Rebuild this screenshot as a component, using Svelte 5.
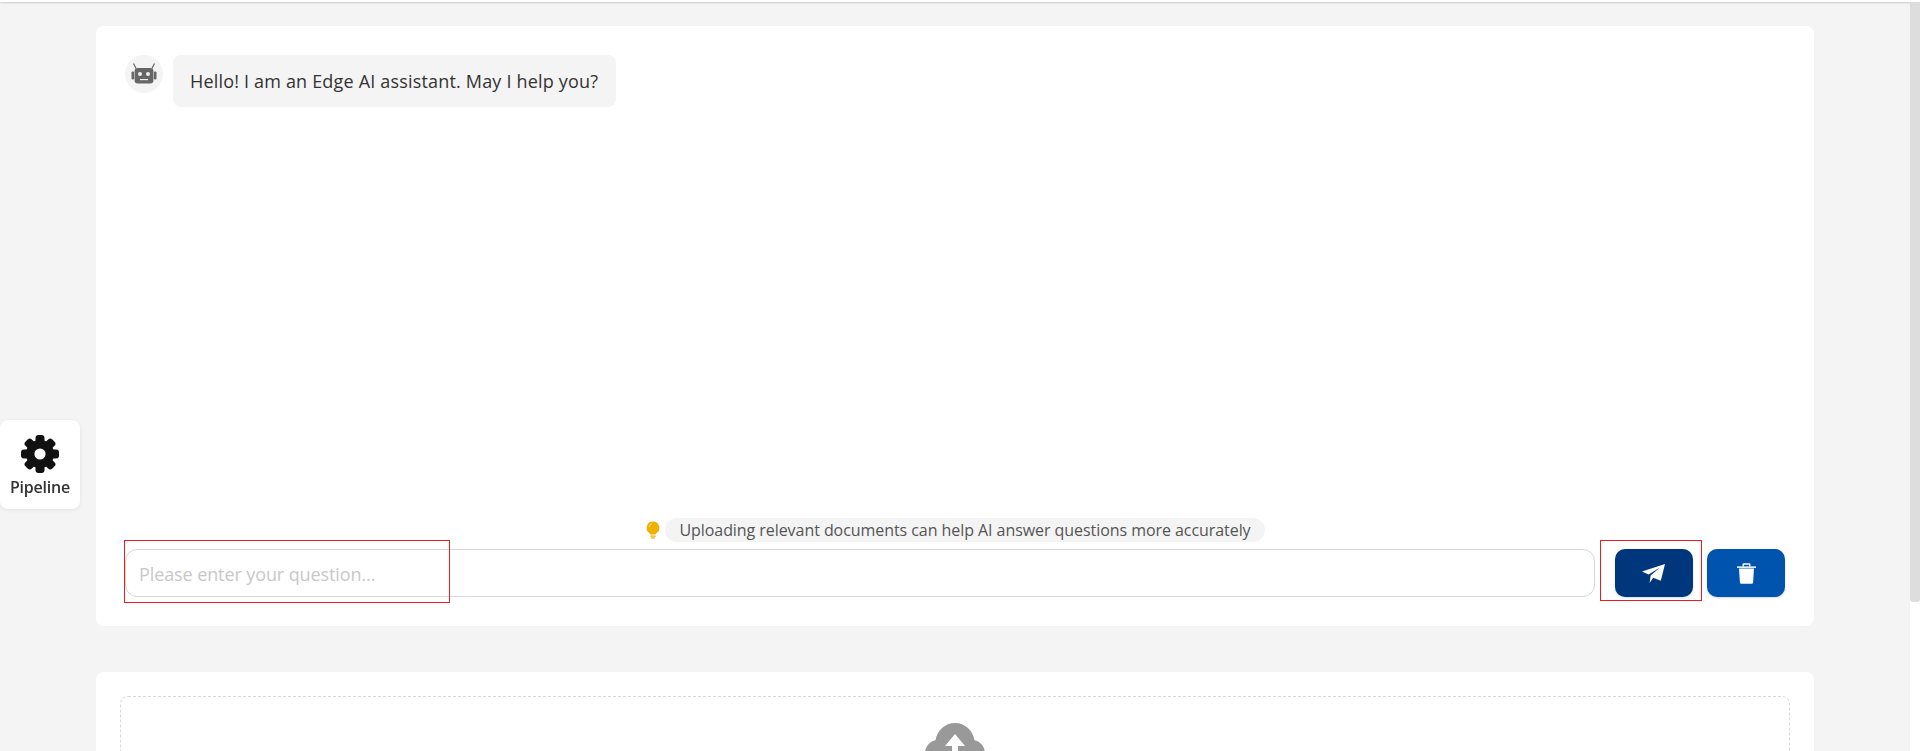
<script>
  let question = $state('');
  const teeth = [0, 45, 90, 135, 180, 225, 270, 315];
</script>

<div class="topbar"></div>

<aside class="pipeline-btn">
  <svg class="gear" viewBox="0 0 38 38" aria-hidden="true">
    {#each teeth as angle}
      <rect x="14.5" y="0" width="9" height="10" rx="3" fill="#111" transform="rotate({angle} 19 19)" />
    {/each}
    <circle cx="19" cy="19" r="14" fill="#111" />
    <circle cx="19" cy="19" r="5.6" fill="#fff" />
  </svg>
  <span>Pipeline</span>
</aside>

<main>
  <section class="card chat">
    <div class="messages">
      <div class="avatar">
        <svg viewBox="0 0 26 21" width="26" height="21" aria-hidden="true">
          <path d="M2.500 .5l2.600 5M23.500 .5l-2.600 5" stroke="#666" stroke-width="1.2" fill="none" />
          <rect x="0.5" y="8.500" width="2.600" height="8" rx="1" fill="#666" />
          <rect x="22.900" y="8.500" width="2.600" height="8" rx="1" fill="#666" />
          <rect x="3.600" y="5" width="18.800" height="15.500" rx="3.200" fill="#666" />
          <circle cx="9" cy="11" r="2" fill="#eee" />
          <circle cx="17" cy="11" r="2" fill="#eee" />
          <rect x="9" y="16" width="8" height="1.200" fill="#eee" />
        </svg>
      </div>
      <div class="bubble">Hello! I am an Edge AI assistant. May I help you?</div>
    </div>

    <div class="tip">
      <svg viewBox="0 0 16 18" width="16" height="18" aria-hidden="true">
        <path d="M8 0.5a6.300 6.300 0 0 0-3.600 11.500c.5.4.8.9.8 1.500h5.600c0-.6.3-1.100.8-1.500A6.300 6.300 0 0 0 8 .5z" fill="#efb000" />
        <path d="M4.200 5.800a3.800 3.800 0 0 1 2.600-3" stroke="#fbe39a" stroke-width="1" fill="none" />
        <rect x="5.300" y="14.400" width="5.400" height="1.400" rx=".5" fill="#efb000" />
        <rect x="6" y="16.300" width="4" height="1.300" rx=".6" fill="#efb000" />
      </svg>
      <span>Uploading relevant documents can help AI answer questions more accurately</span>
    </div>

    <div class="input-row">
      <div class="field">
        <input bind:value={question} placeholder="Please enter your question..." />
        <div class="mark mark-input"></div>
      </div>
      <button class="send" aria-label="Send">
        <svg viewBox="0 0 23 19" width="23" height="19" aria-hidden="true">
          <path d="M23 0L0 7.400l6.600 3L18 3.600 8.600 11.600 7.600 19l3.600-5.200 7.600 3z" fill="#fff" />
        </svg>
        <div class="mark mark-send"></div>
      </button>
      <button class="clear" aria-label="Clear">
        <svg viewBox="0 0 19 21" width="19" height="21" aria-hidden="true">
          <path d="M5.500 3.400V1.600C5.500.8 6.100.3 6.900.3h5.200c.8 0 1.400.5 1.400 1.300v1.800h-1.400V1.800H6.900v1.600z" fill="#fff" />
          <path d="M0 3.400h19v1.500H0z" fill="#fff" />
          <path d="M2 5.600h15l-.9 13.600c-.1 1-.8 1.600-1.700 1.600H4.600c-.9 0-1.600-.6-1.700-1.600z" fill="#fff" />
        </svg>
      </button>
    </div>
  </section>

  <section class="card upload">
    <div class="dropzone">
      <svg viewBox="0 0 60 44" width="60" height="44" aria-hidden="true">
        <path d="M14 44C6 44 0 38 0 30.500 0 24 4.500 18.500 10.500 17.300 12 7.500 20 0 30 0s18 7.500 19.500 17.300C55.500 18.500 60 24 60 30.500 60 38 54 44 46 44z" fill="#999" />
        <path d="M30 11L20 23h7v21h6V23h7z" fill="#fff" />
      </svg>
    </div>
  </section>
</main>

<div class="scrollbar"><div class="thumb"></div></div>

<style>
  :global(body) {
    background: #f4f4f4;
    font-family: "Open Sans", "Noto Sans", sans-serif;
    height: 751px;
    overflow: hidden;
    color: #333;
  }

  .topbar {
    height: 2px;
    background: #fff;
    box-shadow: 0 1px 2px rgba(0, 0, 0, 0.18);
  }

  main {
    width: 1718px;
    margin: 24px 0 0 96px;
  }

  .card {
    background: #fff;
    border-radius: 8px;
  }

  .chat {
    height: 600px;
    box-sizing: border-box;
    padding: 29px;
    display: flex;
    flex-direction: column;
  }

  .messages {
    flex: 1;
    display: flex;
    align-items: flex-start;
    gap: 10px;
  }

  .avatar {
    width: 38px;
    height: 38px;
    border-radius: 50%;
    background: #f4f4f4;
    display: flex;
    align-items: center;
    justify-content: center;
    padding-bottom: 2px;
    box-sizing: border-box;
  }

  .bubble {
    background: #f4f4f4;
    border-radius: 8px;
    padding: 14px 18px 14px 17px;
    font-size: 18px;
    letter-spacing: 0.18px;
    line-height: 24px;
    color: #333;
  }

  .tip {
    align-self: center;
    display: flex;
    align-items: center;
    gap: 4px;
    margin-bottom: 7px;
    font-size: 16px;
    letter-spacing: -0.06px;
    color: #555;
  }

  .tip span {
    background: #f4f4f4;
    border-radius: 12px;
    height: 24px;
    line-height: 24px;
    padding: 0 14px;
  }

  .input-row {
    display: flex;
    height: 48px;
  }

  .field {
    flex: 1;
    position: relative;
  }

  input {
    width: 100%;
    height: 48px;
    box-sizing: border-box;
    border: 1px solid #d6d6d6;
    border-radius: 12px;
    padding: 2px 13px 0;
    font: inherit;
    font-size: 18px;
    letter-spacing: -0.1px;
    outline: none;
  }

  input::placeholder {
    color: #c8c8c8;
  }

  button {
    width: 78px;
    height: 48px;
    border: none;
    border-radius: 10px;
    display: flex;
    align-items: center;
    justify-content: center;
    position: relative;
    box-shadow: 0 1px 2px rgba(0, 84, 174, 0.2);
    padding: 0;
  }

  .send {
    background: #00377c;
    margin-left: 20px;
  }

  .send svg {
    margin-right: 2px;
  }

  .clear {
    background: #0054ae;
    margin-left: 14px;
  }

  /* red annotation boxes drawn over the screenshot */
  .mark {
    position: absolute;
    border: 1px solid #ed1c24;
    pointer-events: none;
  }

  .mark-input {
    left: -1px;
    top: -9px;
    width: 324px;
    height: 61px;
  }

  .mark-send {
    left: -15px;
    top: -9px;
    width: 100px;
    height: 59px;
  }

  .upload {
    margin-top: 46px;
    padding: 24px;
  }

  .dropzone {
    border: 1px dashed #d9d9d9;
    border-radius: 8px;
    height: 240px;
    display: flex;
    justify-content: center;
    padding-top: 26px;
    box-sizing: border-box;
  }

  .pipeline-btn {
    position: fixed;
    left: 0;
    top: 420px;
    width: 80px;
    height: 89px;
    background: #fff;
    border-radius: 8px;
    box-shadow: 0 1px 4px rgba(0, 0, 0, 0.08);
    display: flex;
    flex-direction: column;
    align-items: center;
    padding-top: 15px;
    box-sizing: border-box;
    font-size: 16px;
    font-weight: 600;
    letter-spacing: -0.2px;
    line-height: 22px;
  }

  .gear {
    width: 38px;
    height: 38px;
    margin-bottom: 3px;
  }

  .scrollbar {
    position: fixed;
    right: 0;
    top: 0;
    bottom: 0;
    width: 10px;
    background: #fff;
  }

  .thumb {
    margin-top: 2px;
    height: 600px;
    background: #ddd;
    border-radius: 0 0 3px 3px;
  }
</style>
